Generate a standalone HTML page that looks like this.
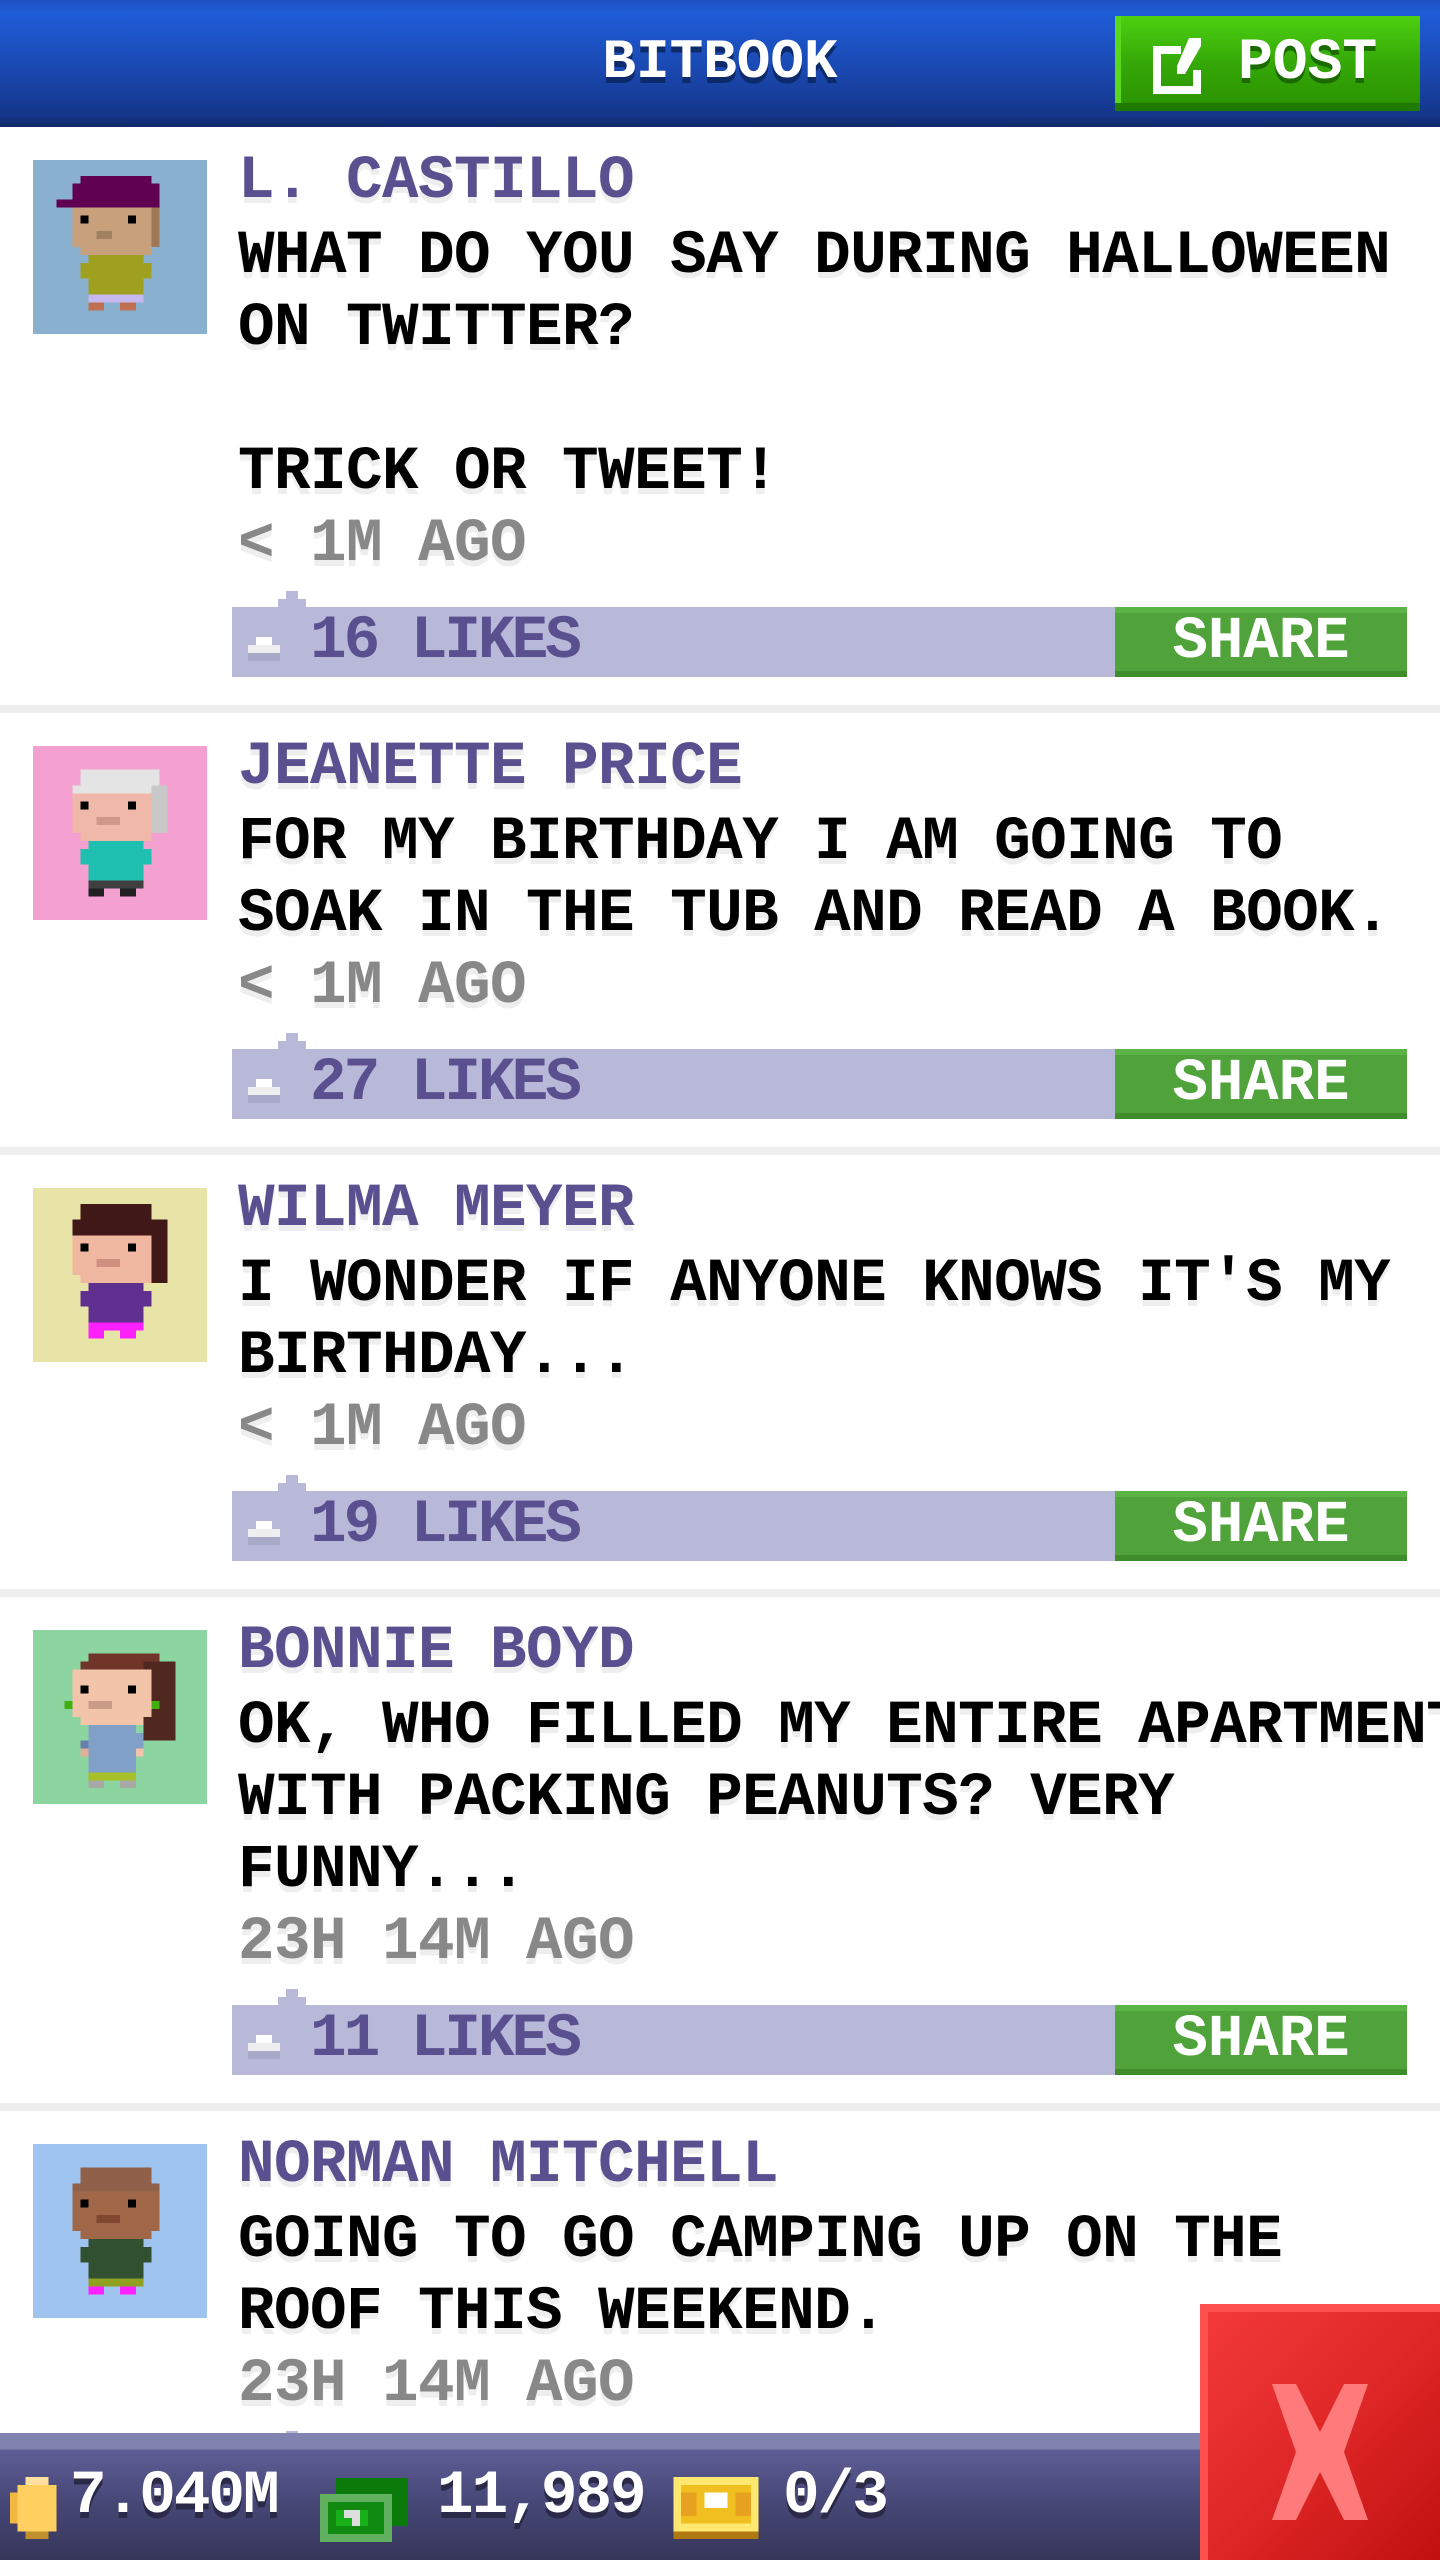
<!DOCTYPE html>
<html><head><meta charset="utf-8">
<style>
html,body{margin:0;padding:0;}
body{width:1440px;height:2560px;overflow:hidden;position:relative;background:#fff;font-family:"Liberation Mono","DejaVu Sans Mono",monospace;font-weight:bold;text-transform:uppercase;}
.hdr{position:absolute;left:0;top:0;width:1440px;height:127px;background:linear-gradient(#1d4fbe 0,#1f5cd8 12px,#1a48b0 70px,#14368a 115px,#0f2a68 127px);}
.hdr .t{position:absolute;left:0;width:1440px;top:30px;text-align:center;color:#fff;font-size:56px;line-height:64px;text-shadow:0 6px 0 #0d2a6a;}
.post-btn{position:absolute;left:1115px;top:16px;width:305px;height:95px;background:linear-gradient(#4cd010,#35a808 50%,#2a9000);box-shadow:inset 0 -8px 0 #1f7a00,inset 6px 0 0 #5ad81c;}
.post-btn .tx{position:absolute;left:123px;top:16px;color:#fff;font-size:58px;line-height:64px;text-shadow:0 5px 0 #1a6a00;}
.feed{position:absolute;left:0;top:127px;width:1440px;}
.post{position:relative;padding-top:19px;padding-bottom:28px;border-bottom:8px solid #eeeeee;}
.av{position:absolute;left:33px;top:33px;width:174px;height:174px;}
.txt{margin-left:238px;font-size:61px;line-height:72px;color:#000;text-shadow:0 6px 0 #eeeeee;white-space:pre;letter-spacing:-0.6px;}
.name{color:#5a5090;}
.body{margin-top:3px;}
.time{color:#888;}
.bar{position:relative;margin-left:232px;width:1175px;height:70px;margin-top:26px;background:#b8b8d8;}
.bar .notch{position:absolute;left:54px;top:-16px;width:12px;height:16px;background:#b8b8d8;}
.bar .notch2{position:absolute;left:46px;top:-8px;width:28px;height:8px;background:#b8b8d8;}
.bar .lk{position:absolute;left:78px;top:-1px;font-size:61px;line-height:72px;color:#5a5090;letter-spacing:-3px;}
.bar .th{position:absolute;left:16px;top:22px;width:32px;height:32px;}
.share{position:absolute;left:883px;top:0;width:292px;height:70px;background:#4fa33a;box-shadow:inset 0 -6px 0 #3e8c2c,inset 0 6px 0 #5cb446;}
.share span{position:absolute;left:0;width:292px;text-align:center;top:-1px;color:#fff;font-size:59px;line-height:72px;}
.foot{position:absolute;left:0;top:2433px;width:1440px;height:127px;background:linear-gradient(#8282b0 0,#8282b0 16px,#5e5e96 17px,#4a4a7c 60px,#36365a 127px);}
.foot .v{position:absolute;top:28px;color:#fff;font-size:61px;line-height:72px;text-shadow:0 6px 0 #2a2a48;letter-spacing:-2px;}
.xbtn{position:absolute;left:1200px;top:2304px;width:240px;height:256px;background:linear-gradient(135deg,#f43a3a,#e02828 50%,#c01010);box-shadow:inset 8px 8px 0 #ff5050;}
</style></head><body>

<div class="hdr">
  <div class="t">BITBOOK</div>
  <div class="post-btn">
    <svg style="position:absolute;left:34px;top:18px" width="66" height="64" viewBox="0 0 33 32">
      <path d="M2 6h14v4H6v16h16v-8h4v12H2z" fill="#fff"/>
      <path d="M20 2h6v4l-8 14h-4v-4z" fill="#fff"/>
    </svg>
    <div class="tx">POST</div>
  </div>
</div>

<div class="feed">
<div class="post">
  <svg class="av" viewBox="0 0 22 22" shape-rendering="crispEdges">
    <rect width="22" height="22" fill="#8ab0d0"/>
    <rect x="6" y="2" width="9" height="1" fill="#600050"/>
    <rect x="5" y="3" width="11" height="2" fill="#600050"/>
    <rect x="3" y="5" width="13" height="1" fill="#600050"/>
    <rect x="5" y="6" width="11" height="5" fill="#c8a07c"/>
    <rect x="6" y="11" width="9" height="1" fill="#c8a07c"/>
    <rect x="15" y="6" width="1" height="5" fill="#a07858"/>
    <rect x="6" y="7" width="1" height="1" fill="#000"/><rect x="12" y="7" width="1" height="1" fill="#000"/>
    <rect x="8" y="9" width="2" height="1" fill="#a08060"/>
    <rect x="7" y="12" width="7" height="5" fill="#a0a020"/>
    <rect x="6" y="13" width="1" height="2" fill="#a0a020"/><rect x="14" y="13" width="1" height="2" fill="#a0a020"/>
    <rect x="7" y="17" width="7" height="1" fill="#c8b8f0"/>
    <rect x="7" y="18" width="2" height="1" fill="#c07050"/><rect x="11" y="18" width="2" height="1" fill="#c07050"/>
  </svg>
  <div class="txt name">L. CASTILLO</div>
  <div class="txt body">WHAT DO YOU SAY DURING HALLOWEEN
ON TWITTER?

TRICK OR TWEET!</div>
  <div class="txt time">&lt; 1M AGO</div>
  <div class="bar"><div class="notch"></div><div class="notch2"></div>
    <svg class="th" viewBox="0 0 4 4" shape-rendering="crispEdges"><rect x="1" y="1" width="2" height="1" fill="#fff"/><rect x="0" y="2" width="4" height="2" fill="#eee"/><rect x="0" y="3" width="4" height="1" fill="#a8a8c8"/></svg>
    <div class="lk">16 LIKES</div><div class="share"><span>SHARE</span></div></div>
</div>
<div class="post">
  <svg class="av" viewBox="0 0 22 22" shape-rendering="crispEdges">
    <rect width="22" height="22" fill="#f4a0d0"/>
    <rect x="6" y="3" width="10" height="2" fill="#e4e4e4"/>
    <rect x="5" y="5" width="12" height="1" fill="#e4e4e4"/>
    <rect x="15" y="5" width="2" height="6" fill="#c8c8c8"/>
    <rect x="5" y="6" width="10" height="5" fill="#f0b8a8"/>
    <rect x="6" y="11" width="9" height="1" fill="#f0b8a8"/>
    <rect x="6" y="7" width="1" height="1" fill="#000"/><rect x="12" y="7" width="1" height="1" fill="#000"/>
    <rect x="8" y="9" width="3" height="1" fill="#d09888"/>
    <rect x="7" y="12" width="7" height="5" fill="#20c0b0"/>
    <rect x="6" y="13" width="1" height="2" fill="#20c0b0"/><rect x="14" y="13" width="1" height="2" fill="#20c0b0"/>
    <rect x="7" y="17" width="7" height="1" fill="#404040"/>
    <rect x="7" y="18" width="2" height="1" fill="#202020"/><rect x="11" y="18" width="2" height="1" fill="#202020"/>
  </svg>
  <div class="txt name">JEANETTE PRICE</div>
  <div class="txt body">FOR MY BIRTHDAY I AM GOING TO
SOAK IN THE TUB AND READ A BOOK.</div>
  <div class="txt time">&lt; 1M AGO</div>
  <div class="bar"><div class="notch"></div><div class="notch2"></div>
    <svg class="th" viewBox="0 0 4 4" shape-rendering="crispEdges"><rect x="1" y="1" width="2" height="1" fill="#fff"/><rect x="0" y="2" width="4" height="2" fill="#eee"/><rect x="0" y="3" width="4" height="1" fill="#a8a8c8"/></svg>
    <div class="lk">27 LIKES</div><div class="share"><span>SHARE</span></div></div>
</div>
<div class="post">
  <svg class="av" viewBox="0 0 22 22" shape-rendering="crispEdges">
    <rect width="22" height="22" fill="#e8e4a8"/>
    <rect x="6" y="2" width="9" height="2" fill="#401818"/>
    <rect x="5" y="4" width="12" height="2" fill="#401818"/>
    <rect x="15" y="6" width="2" height="6" fill="#401818"/>
    <rect x="5" y="6" width="10" height="5" fill="#f0b8a0"/>
    <rect x="6" y="11" width="9" height="1" fill="#f0b8a0"/>
    <rect x="6" y="7" width="1" height="1" fill="#000"/><rect x="12" y="7" width="1" height="1" fill="#000"/>
    <rect x="8" y="9" width="3" height="1" fill="#d09080"/>
    <rect x="7" y="12" width="7" height="5" fill="#603090"/>
    <rect x="6" y="13" width="1" height="2" fill="#603090"/><rect x="14" y="13" width="1" height="2" fill="#603090"/>
    <rect x="7" y="17" width="7" height="1" fill="#ff20ff"/>
    <rect x="7" y="18" width="2" height="1" fill="#ff20ff"/><rect x="11" y="18" width="2" height="1" fill="#ff20ff"/>
  </svg>
  <div class="txt name">WILMA MEYER</div>
  <div class="txt body">I WONDER IF ANYONE KNOWS IT'S MY
BIRTHDAY...</div>
  <div class="txt time">&lt; 1M AGO</div>
  <div class="bar"><div class="notch"></div><div class="notch2"></div>
    <svg class="th" viewBox="0 0 4 4" shape-rendering="crispEdges"><rect x="1" y="1" width="2" height="1" fill="#fff"/><rect x="0" y="2" width="4" height="2" fill="#eee"/><rect x="0" y="3" width="4" height="1" fill="#a8a8c8"/></svg>
    <div class="lk">19 LIKES</div><div class="share"><span>SHARE</span></div></div>
</div>
<div class="post">
  <svg class="av" viewBox="0 0 22 22" shape-rendering="crispEdges">
    <rect width="22" height="22" fill="#8cd4a0"/>
    <rect x="7" y="3" width="9" height="1" fill="#703428"/>
    <rect x="6" y="4" width="10" height="1" fill="#703428"/>
    <rect x="5" y="5" width="2" height="1" fill="#703428"/>
    <rect x="14" y="4" width="4" height="10" fill="#502820"/>
    <rect x="5" y="5" width="10" height="6" fill="#f2c4aa"/>
    <rect x="6" y="11" width="8" height="1" fill="#f2c4aa"/>
    <rect x="6" y="7" width="1" height="1" fill="#000"/><rect x="12" y="7" width="1" height="1" fill="#000"/>
    <rect x="7" y="9" width="3" height="1" fill="#c89c88"/>
    <rect x="4" y="9" width="1" height="1" fill="#40b010"/><rect x="15" y="9" width="1" height="1" fill="#40b010"/>
    <rect x="7" y="12" width="6" height="6" fill="#80a0c8"/>
    <rect x="6" y="14" width="1" height="1" fill="#6880a8"/><rect x="13" y="13" width="1" height="2" fill="#80a0c8"/>
    <rect x="6" y="15" width="1" height="1" fill="#e0b098"/><rect x="13" y="15" width="1" height="1" fill="#f2c4aa"/>
    <rect x="7" y="18" width="6" height="1" fill="#a8c028"/>
    <rect x="7" y="19" width="2" height="1" fill="#a8a8a8"/><rect x="11" y="19" width="2" height="1" fill="#a8a8a8"/>
  </svg>
  <div class="txt name">BONNIE BOYD</div>
  <div class="txt body">OK, WHO FILLED MY ENTIRE APARTMENT
WITH PACKING PEANUTS? VERY
FUNNY...</div>
  <div class="txt time">23H 14M AGO</div>
  <div class="bar"><div class="notch"></div><div class="notch2"></div>
    <svg class="th" viewBox="0 0 4 4" shape-rendering="crispEdges"><rect x="1" y="1" width="2" height="1" fill="#fff"/><rect x="0" y="2" width="4" height="2" fill="#eee"/><rect x="0" y="3" width="4" height="1" fill="#a8a8c8"/></svg>
    <div class="lk">11 LIKES</div><div class="share"><span>SHARE</span></div></div>
</div>
<div class="post">
  <svg class="av" viewBox="0 0 22 22" shape-rendering="crispEdges">
    <rect width="22" height="22" fill="#a0c4f0"/>
    <rect x="6" y="3" width="9" height="2" fill="#906048"/>
    <rect x="5" y="5" width="11" height="1" fill="#906048"/>
    <rect x="5" y="6" width="11" height="5" fill="#a06848"/>
    <rect x="6" y="11" width="9" height="1" fill="#a06848"/>
    <rect x="6" y="7" width="1" height="1" fill="#000"/><rect x="12" y="7" width="1" height="1" fill="#000"/>
    <rect x="8" y="9" width="3" height="1" fill="#804830"/>
    <rect x="7" y="12" width="7" height="5" fill="#305030"/>
    <rect x="6" y="13" width="1" height="2" fill="#305030"/><rect x="14" y="13" width="1" height="2" fill="#305030"/>
    <rect x="7" y="17" width="7" height="1" fill="#90a020"/>
    <rect x="7" y="18" width="2" height="1" fill="#ff20ff"/><rect x="11" y="18" width="2" height="1" fill="#ff20ff"/>
  </svg>
  <div class="txt name">NORMAN MITCHELL</div>
  <div class="txt body">GOING TO GO CAMPING UP ON THE
ROOF THIS WEEKEND.</div>
  <div class="txt time">23H 14M AGO</div>
  <div class="bar"><div class="notch"></div><div class="notch2"></div>
    <div class="lk">8 LIKES</div><div class="share"><span>SHARE</span></div></div>
</div>
</div>

<div class="foot">
  <svg style="position:absolute;left:8px;top:44px" width="58" height="62" viewBox="0 0 7 8" shape-rendering="crispEdges">
    <rect x="2" y="0" width="3" height="1" fill="#ffe0a0"/>
    <rect x="1" y="1" width="5" height="6" fill="#ffd060"/>
    <rect x="0" y="2" width="1" height="4" fill="#f0b840"/>
    <rect x="2" y="7" width="3" height="1" fill="#c09030"/>
  </svg>
  <div class="v" style="left:70px">7.040M</div>
  <svg style="position:absolute;left:320px;top:44px" width="88" height="66" viewBox="0 0 11 8" shape-rendering="crispEdges">
    <rect x="2" y="0" width="9" height="6" fill="#0a7a0a"/>
    <rect x="0" y="2" width="9" height="6" fill="#60b060"/>
    <rect x="1" y="3" width="7" height="4" fill="#108a10"/>
    <rect x="2" y="4" width="4" height="2" fill="#18b018"/>
    <rect x="3" y="4" width="2" height="1" fill="#ddd"/><rect x="4" y="5" width="1" height="1" fill="#ddd"/>
  </svg>
  <div class="v" style="left:437px">11,989</div>
  <svg style="position:absolute;left:672px;top:44px" width="88" height="62" viewBox="0 0 11 8" shape-rendering="crispEdges">
    <rect x="0" y="0" width="11" height="8" fill="#ffe870"/>
    <rect x="1" y="1" width="9" height="5" fill="#f0c020"/>
    <rect x="1" y="2" width="2" height="3" fill="#e8a020"/><rect x="8" y="2" width="2" height="3" fill="#e8a020"/>
    <rect x="4" y="2" width="3" height="2" fill="#fff"/>
    <rect x="0" y="7" width="11" height="1" fill="#b07810"/>
  </svg>
  <div class="v" style="left:783px">0/3</div>
</div>

<div class="xbtn">
  <svg style="position:absolute;left:64px;top:80px" width="112" height="136" viewBox="0 0 14 17">
    <path d="M1 0h3l3 6 3-6h3l-3 8.5 3 8.5h-3l-3-6-3 6H1l3-8.5z" fill="#ff7a7a"/>
  </svg>
</div>
</body></html>
